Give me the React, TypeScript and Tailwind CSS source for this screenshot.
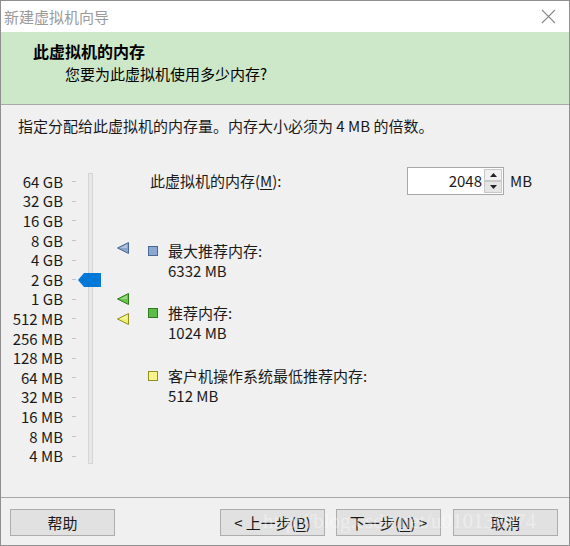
import React from "react";

const scaleLabels = [
  "64 GB", "32 GB", "16 GB", "8 GB", "4 GB", "2 GB", "1 GB",
  "512 MB", "256 MB", "128 MB", "64 MB", "32 MB", "16 MB", "8 MB", "4 MB",
];

const ROW = 19.6;
// y (inside the scale box) for a size in MB, 64 GB at row 0
function yFor(mb: number): number {
  const steps = Math.log2(65536 / mb);
  return steps * ROW + ROW / 2;
}

function Marker({ mb, fill, stroke }: { mb: number; fill: string; stroke: string }) {
  return (
    <svg
      width="12"
      height="12"
      viewBox="0 0 12 12"
      className="absolute left-[116px]"
      style={{ top: yFor(mb) - 6 }}
    >
      <polygon points="0.5,6 11.5,0.5 11.5,11.5" fill={fill} stroke={stroke} strokeWidth="1" />
      <polygon points="3,6 10,2.5 10,6" fill="white" opacity="0.35" />
    </svg>
  );
}

function Swatch({ fill, stroke }: { fill: string; stroke: string }) {
  return (
    <span
      className="inline-block h-[10px] w-[10px] border"
      style={{ background: fill, borderColor: stroke }}
    />
  );
}

function Btn({ children, className = "" }: { children: React.ReactNode; className?: string }) {
  return (
    <button
      className={
        "flex h-[27px] w-[105px] items-center justify-center border border-[#adadad] bg-[#e1e1e1] text-[15px] text-[#1a1a1a] " +
        className
      }
    >
      {children}
    </button>
  );
}

export default function App() {
  return (
    <div
      className="relative flex h-[546px] w-[570px] flex-col border border-[#8f8f8f] bg-[#f0f0f0] text-[15px] leading-[20px] text-[#1a1a1a]"
      style={{ fontFamily: '"Noto Sans CJK SC", "Noto Sans", sans-serif' }}
    >
      {/* title bar */}
      <div className="flex h-[31px] items-center justify-between bg-white pl-[3px] pr-[13px]">
        <span className="text-[#9a9a9a]">新建虚拟机向导</span>
        <svg width="15" height="15" viewBox="0 0 15 15">
          <path d="M1 1 L14 14 M14 1 L1 14" stroke="#8a8a8a" strokeWidth="1.1" />
        </svg>
      </div>

      {/* header */}
      <div className="h-[73px] border-b border-[#a8a8a8] bg-[#cde8c9] pl-[32px] pt-[8px]">
        <div className="text-[16px] font-bold leading-[22px] text-black">此虚拟机的内存</div>
        <div className="pl-[32px] pt-[2px] text-black">您要为此虚拟机使用多少内存?</div>
      </div>

      {/* body */}
      <div className="flex flex-1 flex-col pl-[17px] pt-[11px]">
        <div>指定分配给此虚拟机的内存量。内存大小必须为 4 MB 的倍数。</div>

        <div className="mt-[36px] flex">
          {/* scale */}
          <div className="relative -ml-[17px] h-[294px] w-[147px]">
            <div className="flex w-[62px] flex-col items-end">
              {scaleLabels.map((l) => (
                <div key={l} className="flex h-[19.6px] items-center whitespace-nowrap">
                  {l}
                </div>
              ))}
            </div>
            <div className="absolute left-[71px] top-0 flex flex-col">
              {scaleLabels.map((l) => (
                <div key={l} className="flex h-[19.6px] items-center">
                  <div className="h-px w-[4px] bg-[#c4c4c4]" />
                </div>
              ))}
            </div>
            {/* track */}
            <div className="absolute left-[87px] top-[1px] h-[291px] w-[5px] border border-[#d6d6d6] bg-[#e7e7e7]" />
            {/* thumb */}
            <svg
              width="23"
              height="14"
              viewBox="0 0 23 14"
              className="absolute left-[77px]"
              style={{ top: yFor(2048) - 7 }}
            >
              <polygon points="0,7 6,0 23,0 23,14 6,14" fill="#0078d7" />
            </svg>
            <Marker mb={6332} fill="#8ba6cc" stroke="#4b6894" />
            <Marker mb={1024} fill="#6cc24a" stroke="#2f7a1f" />
            <Marker mb={512} fill="#eeee72" stroke="#8f8f22" />
          </div>

          {/* right side */}
          <div className="flex flex-1 flex-col">
            <div className="-mt-[5px] flex h-[28px] items-center">
              <span className="ml-[2px] w-[257px]">
                此虚拟机的内存(<span className="underline underline-offset-2">M</span>):
              </span>
              <div className="flex h-[28px] w-[97px] border border-[#a8a8a8] bg-white">
                <div className="flex flex-1 items-center justify-end pr-[2px]">2048</div>
                <div className="flex w-[19px] flex-col py-px pr-px">
                  <div className="flex flex-1 items-center justify-center border border-[#c8c8c8] bg-[#f0f0f0]">
                    <svg width="7" height="4" viewBox="0 0 7 4">
                      <polygon points="0,4 3.5,0 7,4" fill="#222" />
                    </svg>
                  </div>
                  <div className="flex flex-1 items-center justify-center border border-[#c8c8c8] bg-[#e5e5e5]">
                    <svg width="7" height="4" viewBox="0 0 7 4">
                      <polygon points="0,0 3.5,4 7,0" fill="#222" />
                    </svg>
                  </div>
                </div>
              </div>
              <span className="ml-[6px]">MB</span>
            </div>

            <div className="mt-[46px] flex flex-col">
              <div className="flex items-center">
                <Swatch fill="#8aa8d2" stroke="#4b6894" />
                <span className="ml-[10px]">最大推荐内存:</span>
              </div>
              <div className="pl-[20px]">6332 MB</div>

              <div className="mt-[22px] flex items-center">
                <Swatch fill="#5dbd48" stroke="#2f7a1f" />
                <span className="ml-[10px]">推荐内存:</span>
              </div>
              <div className="pl-[20px]">1024 MB</div>

              <div className="mt-[23px] flex items-center">
                <Swatch fill="#f4f48a" stroke="#8f8f22" />
                <span className="ml-[10px]">客户机操作系统最低推荐内存:</span>
              </div>
              <div className="pl-[20px]">512 MB</div>
            </div>
          </div>
        </div>
      </div>

      {/* footer */}
      <div className="flex h-[48px] items-start border-t border-[#a8a8a8] pl-[9px] pt-[11px]">
        <Btn>帮助</Btn>
        <Btn className="ml-[105px]">
          &lt; 上一步(<span className="underline underline-offset-2">B</span>)
        </Btn>
        <Btn className="ml-[11px] w-[104px]">
          下一步(<span className="underline underline-offset-2">N</span>) &gt;
        </Btn>
        <Btn className="ml-[12px]">取消</Btn>
      </div>

      {/* watermark */}
      <div
        className="pointer-events-none absolute left-[262px] top-[510px] whitespace-nowrap text-[21px] text-white/40"
        style={{ fontFamily: '"Liberation Serif", serif' }}
      >
        http://blog.csdn.net/u010138074
      </div>
    </div>
  );
}
